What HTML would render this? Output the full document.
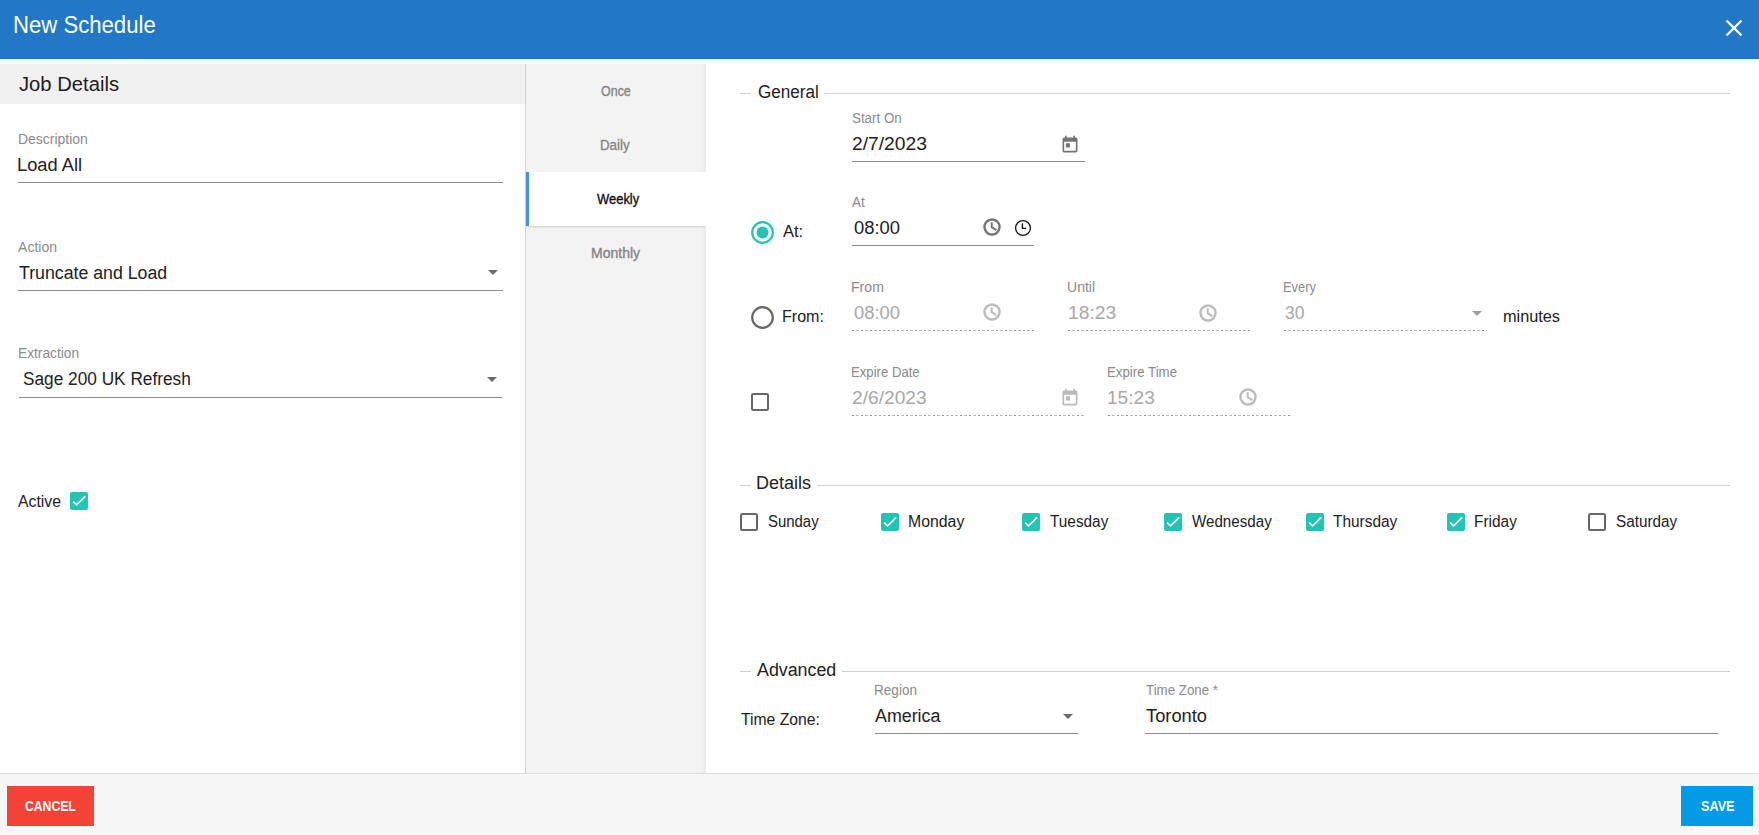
<!DOCTYPE html>
<html><head><meta charset="utf-8"><style>
html,body{margin:0;padding:0;}
body{width:1759px;height:835px;overflow:hidden;position:relative;background:#fff;font-family:"Liberation Sans",sans-serif;}
.b{position:absolute;display:block;}
.t{position:absolute;line-height:1;white-space:nowrap;transform-origin:0 0;}
</style></head><body>
<div class="b" style="left:0px;top:0px;width:1759px;height:59px;background:#2377c7"></div>
<svg class="b" style="left:1722px;top:16px" width="24" height="24" viewBox="0 0 24 24"><path d="M4.5 4.5L19.5 19.5M19.5 4.5L4.5 19.5" stroke="#fff" stroke-width="2.4"/></svg>
<div class="b" style="left:0px;top:64px;width:525px;height:40px;background:#f0f0f0"></div>
<div class="b" style="left:18px;top:182px;width:485px;height:1px;background:#8c8c8c"></div>
<div class="b" style="left:18px;top:290px;width:485px;height:1px;background:#8c8c8c"></div>
<div class="b" style="left:19px;top:397px;width:483px;height:1px;background:#8c8c8c"></div>
<svg class="b" style="left:488px;top:270px" width="10" height="5" viewBox="0 0 10 5"><path d="M0 0L10 0L5 5z" fill="#6b6b6b"/></svg>
<svg class="b" style="left:487px;top:377px" width="10" height="5" viewBox="0 0 10 5"><path d="M0 0L10 0L5 5z" fill="#6b6b6b"/></svg>
<svg class="b" style="left:70px;top:492px" width="18" height="18" viewBox="0 0 18 18"><rect x="0" y="0" width="18" height="18" rx="2" fill="#22c4b3"/><path d="M3.2 9.6L6.6 12.9L15.2 4.4" stroke="#fff" stroke-width="1.7" fill="none"/></svg>
<div class="b" style="left:525px;top:64px;width:1px;height:709px;background:#d4d4d4"></div>
<div class="b" style="left:526px;top:64px;width:180px;height:709px;background:#f3f3f3"></div>
<div class="b" style="left:702px;top:64px;width:4px;height:709px;background:linear-gradient(to right,rgba(0,0,0,0),rgba(0,0,0,.045))"></div>
<div class="b" style="left:526px;top:172px;width:180px;height:54px;background:#fff;box-shadow:0 2px 2px -1px rgba(40,20,0,.16)"></div>
<div class="b" style="left:526px;top:172px;width:3px;height:54px;background:#4a90e2"></div>
<div class="b" style="left:740px;top:93px;width:11px;height:1px;background:#cfcfcf"></div>
<div class="b" style="left:824px;top:93px;width:906px;height:1px;background:#cfcfcf"></div>
<div class="b" style="left:740px;top:485px;width:11px;height:1px;background:#cfcfcf"></div>
<div class="b" style="left:817px;top:485px;width:913px;height:1px;background:#cfcfcf"></div>
<div class="b" style="left:740px;top:671px;width:11px;height:1px;background:#cfcfcf"></div>
<div class="b" style="left:842px;top:671px;width:888px;height:1px;background:#cfcfcf"></div>
<div class="b" style="left:852px;top:161px;width:233px;height:1px;background:#8c8c8c"></div>
<div class="b" style="left:852px;top:245px;width:182px;height:1px;background:#8c8c8c"></div>
<div class="b" style="left:875px;top:733px;width:203px;height:1px;background:#8c8c8c"></div>
<div class="b" style="left:1145px;top:733px;width:573px;height:1px;background:#8c8c8c"></div>
<div class="b" style="left:852px;top:330px;width:182px;height:1px;background-image:repeating-linear-gradient(to right,#949494 0,#949494 2px,transparent 2px,transparent 4px,#b8b8b8 4px,#b8b8b8 7px,transparent 7px,transparent 9px)"></div>
<div class="b" style="left:1068px;top:330px;width:182px;height:1px;background-image:repeating-linear-gradient(to right,#949494 0,#949494 2px,transparent 2px,transparent 4px,#b8b8b8 4px,#b8b8b8 7px,transparent 7px,transparent 9px)"></div>
<div class="b" style="left:1284px;top:330px;width:203px;height:1px;background-image:repeating-linear-gradient(to right,#949494 0,#949494 2px,transparent 2px,transparent 4px,#b8b8b8 4px,#b8b8b8 7px,transparent 7px,transparent 9px)"></div>
<div class="b" style="left:852px;top:415px;width:232px;height:1px;background-image:repeating-linear-gradient(to right,#949494 0,#949494 2px,transparent 2px,transparent 4px,#b8b8b8 4px,#b8b8b8 7px,transparent 7px,transparent 9px)"></div>
<div class="b" style="left:1108px;top:415px;width:182px;height:1px;background-image:repeating-linear-gradient(to right,#949494 0,#949494 2px,transparent 2px,transparent 4px,#b8b8b8 4px,#b8b8b8 7px,transparent 7px,transparent 9px)"></div>
<svg class="b" style="left:750px;top:220px" width="25" height="25" viewBox="0 0 25 25"><circle cx="12.5" cy="12.5" r="10.3" fill="none" stroke="#22c4b3" stroke-width="2.2"/><circle cx="12.5" cy="12.5" r="6" fill="#22c4b3"/></svg>
<svg class="b" style="left:750px;top:305px" width="25" height="25" viewBox="0 0 25 25"><circle cx="12.5" cy="12.5" r="10.3" fill="none" stroke="#666" stroke-width="2.2"/></svg>
<svg class="b" style="left:751px;top:393px" width="18" height="18" viewBox="0 0 18 18"><rect x="1" y="1" width="16" height="16" rx="1.5" fill="none" stroke="#666" stroke-width="2"/></svg>
<svg class="b" style="left:740px;top:513px" width="18" height="18" viewBox="0 0 18 18"><rect x="1" y="1" width="16" height="16" rx="1.5" fill="none" stroke="#666" stroke-width="2"/></svg>
<svg class="b" style="left:881px;top:513px" width="18" height="18" viewBox="0 0 18 18"><rect x="0" y="0" width="18" height="18" rx="2" fill="#22c4b3"/><path d="M3.2 9.6L6.6 12.9L15.2 4.4" stroke="#fff" stroke-width="1.7" fill="none"/></svg>
<svg class="b" style="left:1022px;top:513px" width="18" height="18" viewBox="0 0 18 18"><rect x="0" y="0" width="18" height="18" rx="2" fill="#22c4b3"/><path d="M3.2 9.6L6.6 12.9L15.2 4.4" stroke="#fff" stroke-width="1.7" fill="none"/></svg>
<svg class="b" style="left:1164px;top:513px" width="18" height="18" viewBox="0 0 18 18"><rect x="0" y="0" width="18" height="18" rx="2" fill="#22c4b3"/><path d="M3.2 9.6L6.6 12.9L15.2 4.4" stroke="#fff" stroke-width="1.7" fill="none"/></svg>
<svg class="b" style="left:1306px;top:513px" width="18" height="18" viewBox="0 0 18 18"><rect x="0" y="0" width="18" height="18" rx="2" fill="#22c4b3"/><path d="M3.2 9.6L6.6 12.9L15.2 4.4" stroke="#fff" stroke-width="1.7" fill="none"/></svg>
<svg class="b" style="left:1447px;top:513px" width="18" height="18" viewBox="0 0 18 18"><rect x="0" y="0" width="18" height="18" rx="2" fill="#22c4b3"/><path d="M3.2 9.6L6.6 12.9L15.2 4.4" stroke="#fff" stroke-width="1.7" fill="none"/></svg>
<svg class="b" style="left:1588px;top:513px" width="18" height="18" viewBox="0 0 18 18"><rect x="1" y="1" width="16" height="16" rx="1.5" fill="none" stroke="#666" stroke-width="2"/></svg>
<svg class="b" style="left:1059.9px;top:134.8px" width="20" height="20" viewBox="0 0 24 24"><path d="M19 3h-1V1h-2v2H8V1H6v2H5c-1.11 0-1.99.9-1.99 2L3 19c0 1.1.89 2 2 2h14c1.1 0 2-.9 2-2V5c0-1.1-.9-2-2-2zm0 16H5V8h14v11zM7 10h5v5H7z" fill="#757575"/></svg>
<svg class="b" style="left:1060.4px;top:388.0px" width="20" height="20" viewBox="0 0 24 24"><path d="M19 3h-1V1h-2v2H8V1H6v2H5c-1.11 0-1.99.9-1.99 2L3 19c0 1.1.89 2 2 2h14c1.1 0 2-.9 2-2V5c0-1.1-.9-2-2-2zm0 16H5V8h14v11zM7 10h5v5H7z" fill="#bababa"/></svg>
<svg class="b" style="left:980.9px;top:215.8px" width="22" height="22" viewBox="0 0 22 22"><circle cx="11" cy="11" r="7.55" fill="none" stroke="#757575" stroke-width="2.4"/><path d="M10.7 6.2V11.2L15.3 14.1" fill="none" stroke="#757575" stroke-width="2"/></svg>
<svg class="b" style="left:980.8px;top:301.1px" width="22" height="22" viewBox="0 0 22 22"><circle cx="11" cy="11" r="7.55" fill="none" stroke="#bcbcbc" stroke-width="2.4"/><path d="M10.7 6.2V11.2L15.3 14.1" fill="none" stroke="#bcbcbc" stroke-width="2"/></svg>
<svg class="b" style="left:1197px;top:301.5px" width="22" height="22" viewBox="0 0 22 22"><circle cx="11" cy="11" r="7.55" fill="none" stroke="#bcbcbc" stroke-width="2.4"/><path d="M10.7 6.2V11.2L15.3 14.1" fill="none" stroke="#bcbcbc" stroke-width="2"/></svg>
<svg class="b" style="left:1236.8px;top:386px" width="22" height="22" viewBox="0 0 22 22"><circle cx="11" cy="11" r="7.55" fill="none" stroke="#bcbcbc" stroke-width="2.4"/><path d="M10.7 6.2V11.2L15.3 14.1" fill="none" stroke="#bcbcbc" stroke-width="2"/></svg>
<svg class="b" style="left:1013px;top:218px" width="20" height="20" viewBox="0 0 20 20"><circle cx="10" cy="10" r="7.4" fill="none" stroke="#111" stroke-width="1.3"/><path d="M9.4 5.2V10.4H13" fill="none" stroke="#111" stroke-width="1.4"/></svg>
<svg class="b" style="left:1472px;top:311px" width="10" height="5" viewBox="0 0 10 5"><path d="M0 0L10 0L5 5z" fill="#9e9e9e"/></svg>
<svg class="b" style="left:1063px;top:714px" width="10" height="5" viewBox="0 0 10 5"><path d="M0 0L10 0L5 5z" fill="#6b6b6b"/></svg>
<div class="b" style="left:0px;top:773px;width:1759px;height:1px;background:#dcdde2"></div>
<div class="b" style="left:0px;top:774px;width:1759px;height:61px;background:#f7f7f7"></div>
<div class="b" style="left:7px;top:786px;width:87px;height:40px;background:#f44336"></div>
<div class="b" style="left:1681px;top:786px;width:72px;height:40px;background:#039be5"></div>
<div class="t" style="left:12.64px;top:14.00px;font-size:23px;color:#ffffff;font-weight:400;transform:scaleX(0.9623)">New Schedule</div>
<div class="t" style="left:18.60px;top:74.00px;font-size:20px;color:#212121;font-weight:400;transform:scaleX(1.0108)">Job Details</div>
<div class="t" style="left:17.50px;top:132.00px;font-size:14px;color:#8a8a8a;font-weight:400;transform:scaleX(0.9965)">Description</div>
<div class="t" style="left:17.48px;top:156.00px;font-size:18px;color:#212121;font-weight:400;transform:scaleX(1.0151)">Load All</div>
<div class="t" style="left:18.10px;top:240.00px;font-size:14px;color:#8a8a8a;font-weight:400;transform:scaleX(1.0046)">Action</div>
<div class="t" style="left:19.30px;top:264.00px;font-size:18px;color:#212121;font-weight:400;transform:scaleX(0.9851)">Truncate and Load</div>
<div class="t" style="left:17.62px;top:346.00px;font-size:14px;color:#8a8a8a;font-weight:400;transform:scaleX(0.9824)">Extraction</div>
<div class="t" style="left:22.70px;top:370.00px;font-size:18px;color:#212121;font-weight:400;transform:scaleX(0.9581)">Sage 200 UK Refresh</div>
<div class="t" style="left:18.20px;top:494.00px;font-size:16px;color:#212121;font-weight:400;transform:scaleX(0.9846)">Active</div>
<div class="t" style="left:601.40px;top:84.00px;font-size:14px;color:#858585;font-weight:500;transform:scaleX(0.8908);-webkit-text-stroke:0.35px #858585">Once</div>
<div class="t" style="left:600.45px;top:138.00px;font-size:14px;color:#858585;font-weight:500;transform:scaleX(0.9496);-webkit-text-stroke:0.35px #858585">Daily</div>
<div class="t" style="left:596.80px;top:192.00px;font-size:14px;color:#111111;font-weight:500;transform:scaleX(0.9246);-webkit-text-stroke:0.35px #111111">Weekly</div>
<div class="t" style="left:590.70px;top:246.00px;font-size:14px;color:#858585;font-weight:500;transform:scaleX(1.0017);-webkit-text-stroke:0.35px #858585">Monthly</div>
<div class="t" style="left:757.50px;top:83.00px;font-size:18px;color:#212121;font-weight:400;transform:scaleX(0.9502)">General</div>
<div class="t" style="left:852.00px;top:111.00px;font-size:14px;color:#8a8a8a;font-weight:400;transform:scaleX(0.9543)">Start On</div>
<div class="t" style="left:852.00px;top:135.00px;font-size:18px;color:#212121;font-weight:400;transform:scaleX(1.0691)">2/7/2023</div>
<div class="t" style="left:852.00px;top:195.00px;font-size:14px;color:#8a8a8a;font-weight:400;transform:scaleX(0.9597)">At</div>
<div class="t" style="left:854.00px;top:219.00px;font-size:18px;color:#212121;font-weight:400;transform:scaleX(1.0215)">08:00</div>
<div class="t" style="left:783.20px;top:224.00px;font-size:16px;color:#212121;font-weight:400;transform:scaleX(1.0322)">At:</div>
<div class="t" style="left:851.29px;top:280.00px;font-size:14px;color:#8a8a8a;font-weight:400;transform:scaleX(1.0065)">From</div>
<div class="t" style="left:854.00px;top:304.00px;font-size:18px;color:#a8a8a8;font-weight:400;transform:scaleX(1.0215)">08:00</div>
<div class="t" style="left:782.40px;top:309.00px;font-size:16px;color:#212121;font-weight:400;transform:scaleX(1.0018)">From:</div>
<div class="t" style="left:1067.00px;top:280.00px;font-size:14px;color:#8a8a8a;font-weight:400;transform:scaleX(1.0038)">Until</div>
<div class="t" style="left:1068.23px;top:304.00px;font-size:18px;color:#a8a8a8;font-weight:400;transform:scaleX(1.0696)">18:23</div>
<div class="t" style="left:1283.28px;top:280.00px;font-size:14px;color:#8a8a8a;font-weight:400;transform:scaleX(0.9199)">Every</div>
<div class="t" style="left:1284.50px;top:304.00px;font-size:18px;color:#a8a8a8;font-weight:400;transform:scaleX(0.9745)">30</div>
<div class="t" style="left:1502.88px;top:309.00px;font-size:16px;color:#212121;font-weight:400;transform:scaleX(1.0177)">minutes</div>
<div class="t" style="left:851.06px;top:365.00px;font-size:14px;color:#8a8a8a;font-weight:400;transform:scaleX(0.9384)">Expire Date</div>
<div class="t" style="left:852.00px;top:389.00px;font-size:18px;color:#a8a8a8;font-weight:400;transform:scaleX(1.0663)">2/6/2023</div>
<div class="t" style="left:1107.45px;top:365.00px;font-size:14px;color:#8a8a8a;font-weight:400;transform:scaleX(0.9472)">Expire Time</div>
<div class="t" style="left:1107.44px;top:389.00px;font-size:18px;color:#a8a8a8;font-weight:400;transform:scaleX(1.0606)">15:23</div>
<div class="t" style="left:756.20px;top:474.00px;font-size:18px;color:#212121;font-weight:400;transform:scaleX(1.0015)">Details</div>
<div class="t" style="left:767.50px;top:514.00px;font-size:16px;color:#212121;font-weight:400;transform:scaleX(0.9325)">Sunday</div>
<div class="t" style="left:907.81px;top:514.00px;font-size:16px;color:#212121;font-weight:400;transform:scaleX(0.9889)">Monday</div>
<div class="t" style="left:1050.10px;top:514.00px;font-size:16px;color:#212121;font-weight:400;transform:scaleX(0.9593)">Tuesday</div>
<div class="t" style="left:1191.80px;top:514.00px;font-size:16px;color:#212121;font-weight:400;transform:scaleX(0.9465)">Wednesday</div>
<div class="t" style="left:1333.00px;top:514.00px;font-size:16px;color:#212121;font-weight:400;transform:scaleX(0.9641)">Thursday</div>
<div class="t" style="left:1473.64px;top:514.00px;font-size:16px;color:#212121;font-weight:400;transform:scaleX(0.9643)">Friday</div>
<div class="t" style="left:1615.60px;top:514.00px;font-size:16px;color:#212121;font-weight:400;transform:scaleX(0.9541)">Saturday</div>
<div class="t" style="left:757.20px;top:661.00px;font-size:18px;color:#212121;font-weight:400;transform:scaleX(0.9893)">Advanced</div>
<div class="t" style="left:740.70px;top:712.00px;font-size:16px;color:#212121;font-weight:400;transform:scaleX(0.9826)">Time Zone:</div>
<div class="t" style="left:874.13px;top:683.00px;font-size:14px;color:#8a8a8a;font-weight:400;transform:scaleX(0.97)">Region</div>
<div class="t" style="left:875.00px;top:707.00px;font-size:18px;color:#212121;font-weight:400;transform:scaleX(0.991)">America</div>
<div class="t" style="left:1145.60px;top:683.00px;font-size:14px;color:#8a8a8a;font-weight:400;transform:scaleX(0.9504)">Time Zone *</div>
<div class="t" style="left:1145.60px;top:707.00px;font-size:18px;color:#212121;font-weight:400;transform:scaleX(1.0162)">Toronto</div>
<div class="t" style="left:24.70px;top:799.00px;font-size:14px;color:#ffffff;font-weight:700;transform:scaleX(0.8711)">CANCEL</div>
<div class="t" style="left:1700.80px;top:799.00px;font-size:14px;color:#ffffff;font-weight:700;transform:scaleX(0.9035)">SAVE</div>
</body></html>
